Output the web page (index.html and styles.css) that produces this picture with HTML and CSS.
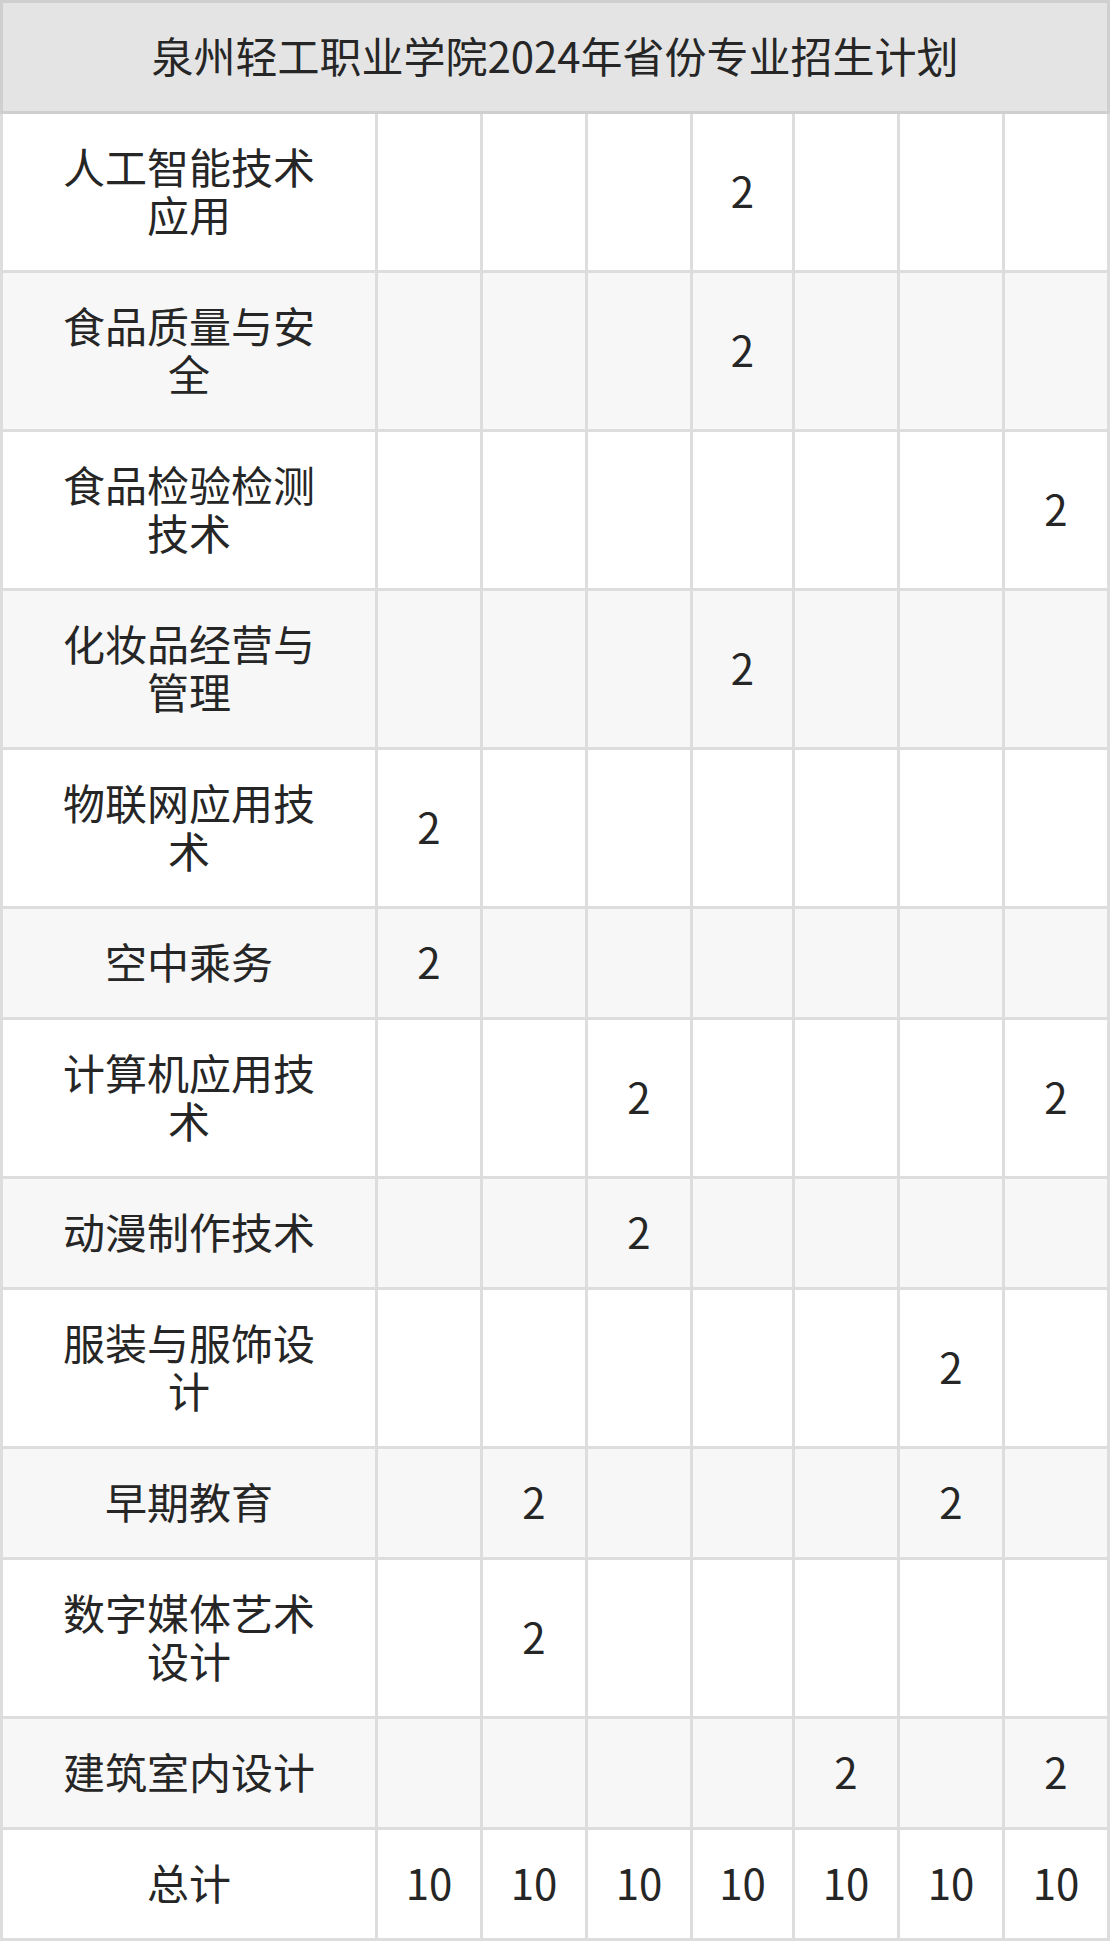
FILE: index.html
```html
<!DOCTYPE html>
<html lang="zh-CN">
<head>
<meta charset="utf-8">
<title>泉州轻工职业学院2024年省份专业招生计划</title>
<link rel="stylesheet" href="styles.css">
</head>
<body>
<div class="plan">
  <div class="title">泉州轻工职业学院2024年省份专业招生计划</div>

  <div class="cell name first">人工智能技术应用</div>
  <div class="cell"></div><div class="cell"></div><div class="cell"></div><div class="cell">2</div><div class="cell"></div><div class="cell"></div><div class="cell"></div>

  <div class="cell name first alt">食品质量与安全</div>
  <div class="cell alt"></div><div class="cell alt"></div><div class="cell alt"></div><div class="cell alt">2</div><div class="cell alt"></div><div class="cell alt"></div><div class="cell alt"></div>

  <div class="cell name first">食品检验检测技术</div>
  <div class="cell"></div><div class="cell"></div><div class="cell"></div><div class="cell"></div><div class="cell"></div><div class="cell"></div><div class="cell">2</div>

  <div class="cell name first alt">化妆品经营与管理</div>
  <div class="cell alt"></div><div class="cell alt"></div><div class="cell alt"></div><div class="cell alt">2</div><div class="cell alt"></div><div class="cell alt"></div><div class="cell alt"></div>

  <div class="cell name first">物联网应用技术</div>
  <div class="cell">2</div><div class="cell"></div><div class="cell"></div><div class="cell"></div><div class="cell"></div><div class="cell"></div><div class="cell"></div>

  <div class="cell name first alt">空中乘务</div>
  <div class="cell alt">2</div><div class="cell alt"></div><div class="cell alt"></div><div class="cell alt"></div><div class="cell alt"></div><div class="cell alt"></div><div class="cell alt"></div>

  <div class="cell name first">计算机应用技术</div>
  <div class="cell"></div><div class="cell"></div><div class="cell">2</div><div class="cell"></div><div class="cell"></div><div class="cell"></div><div class="cell">2</div>

  <div class="cell name first alt">动漫制作技术</div>
  <div class="cell alt"></div><div class="cell alt"></div><div class="cell alt">2</div><div class="cell alt"></div><div class="cell alt"></div><div class="cell alt"></div><div class="cell alt"></div>

  <div class="cell name first">服装与服饰设计</div>
  <div class="cell"></div><div class="cell"></div><div class="cell"></div><div class="cell"></div><div class="cell"></div><div class="cell">2</div><div class="cell"></div>

  <div class="cell name first alt">早期教育</div>
  <div class="cell alt"></div><div class="cell alt">2</div><div class="cell alt"></div><div class="cell alt"></div><div class="cell alt"></div><div class="cell alt">2</div><div class="cell alt"></div>

  <div class="cell name first">数字媒体艺术设计</div>
  <div class="cell"></div><div class="cell">2</div><div class="cell"></div><div class="cell"></div><div class="cell"></div><div class="cell"></div><div class="cell"></div>

  <div class="cell name first alt">建筑室内设计</div>
  <div class="cell alt"></div><div class="cell alt"></div><div class="cell alt"></div><div class="cell alt"></div><div class="cell alt">2</div><div class="cell alt"></div><div class="cell alt">2</div>

  <div class="cell name first">总计</div>
  <div class="cell">10</div><div class="cell">10</div><div class="cell">10</div><div class="cell">10</div><div class="cell">10</div><div class="cell">10</div><div class="cell">10</div>
</div>
</body>
</html>
```

FILE: styles.css
```css
html, body {
  margin: 0;
  padding: 0;
  background: #ffffff;
}

.plan {
  width: 1110px;
  display: grid;
  grid-template-columns: 378px 105px 105px 105px 102px 105px 105px 105px;
  font-family: "Noto Sans CJK SC", "Noto Sans", sans-serif;
  font-size: 42px;
  line-height: 48px;
  color: #262626;
}

.title {
  grid-column: 1 / -1;
  box-sizing: border-box;
  border: 3px solid #cfcfcf;
  background: #e4e4e4;
  padding: 28px 10px 32px;
  text-align: center;
}

.cell {
  box-sizing: border-box;
  border-right: 3px solid #dddddd;
  border-bottom: 3px solid #dddddd;
  background: #ffffff;
  padding: 28px 0 32px;
  display: flex;
  align-items: center;
  justify-content: center;
  text-align: center;
}

.cell.first {
  border-left: 3px solid #dddddd;
}

.cell.name {
  padding: 28px 45px 32px;
}

.cell.alt {
  background: #f7f7f7;
}
```
